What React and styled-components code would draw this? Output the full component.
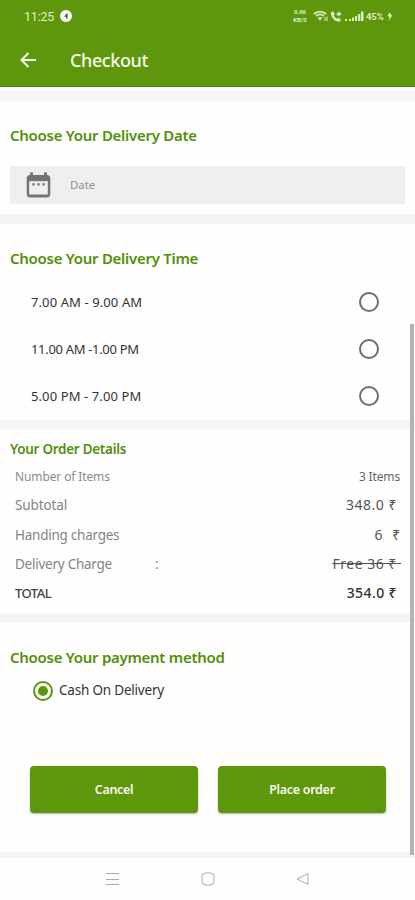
import React from "react";
import styled, { createGlobalStyle } from "styled-components";

const GlobalStyle = createGlobalStyle`
    * {
        box-sizing: border-box;
    }
    body {
        margin: 0;
        background-color: #fefefe;
        font-family: "Noto Sans", "Open Sans", sans-serif;
    }
`;

const Screen = styled.div`
    position: relative;
    width: 415px;
    height: 900px;
    overflow: hidden;
    display: flex;
    flex-direction: column;
    background-color: #fefefe;
`;

const Header = styled.header`
    height: 87px;
    background-color: #5f970c;
    border-bottom: 1px solid #52850a;
    color: #f6faec;
    flex-shrink: 0;
`;

const StatusBar = styled.div`
    height: 32px;
    padding: 0 22px 0 24px;
    display: flex;
    align-items: center;
    justify-content: space-between;
`;

const Clock = styled.div`
    display: flex;
    align-items: center;
    gap: 6px;
    font-family: Roboto, sans-serif;
    font-size: 12.5px;
    letter-spacing: -0.2px;
    color: #e0eec5;
`;

const AppBar = styled.div`
    height: 55px;
    padding-left: 19px;
    display: flex;
    align-items: center;
    gap: 32px;
`;

const Text = styled.span`
    font-size: ${props => props.$size}px;
    font-weight: ${props => props.$weight || 400};
    letter-spacing: ${props => props.$spacing || 0}px;
    color: ${props => props.$color || "#444"};
    line-height: 20px;
    white-space: pre;
`;

const Band = styled.div`
    height: ${props => props.$height}px;
    margin-top: ${props => props.$top || 0}px;
    background-color: #f5f5f6;
    flex-shrink: 0;
`;

const Section = styled.section`
    height: ${props => props.$height}px;
    padding: ${props => props.$top}px 10px 0;
    flex-shrink: 0;
`;

const Title = styled.h2`
    margin: 0;
    height: 20px;
    line-height: ${props => (props.$size ? 20 : 18)}px;
    color: #548f0a;
    font-size: ${props => props.$size || 15}px;
    font-weight: 600;
    letter-spacing: -0.28px;
    white-space: nowrap;
`;

const DateField = styled.div`
    margin-top: 20px;
    height: 38px;
    padding-left: 16px;
    display: flex;
    align-items: center;
    gap: 19px;
    background-color: #efefef;
`;

const TimeList = styled.div`
    padding: 10px 26px 0 21px;
`;

const TimeRow = styled.div`
    height: 47px;
    display: flex;
    align-items: center;
    justify-content: space-between;
`;

const TimeLabel = styled(Text)`
    padding-bottom: 1px;
`;

const Radio = styled.span`
    width: 20px;
    height: 20px;
    margin-bottom: 1px;
    border: 2px solid ${props => (props.$checked ? "#5f970c" : "#6c6c6c")};
    border-radius: 50%;
    display: flex;
    align-items: center;
    justify-content: center;

    &::after {
        content: "";
        width: 10px;
        height: 10px;
        border-radius: 50%;
        background-color: ${props => (props.$checked ? "#5f970c" : "transparent")};
    }
`;

const Details = styled.div`
    padding: 3px 0 0 5px;
`;

const DetailRow = styled.div`
    height: ${props => props.$height}px;
    padding-right: ${props => props.$right}px;
    display: flex;
    align-items: center;
`;

const Colon = styled(Text)`
    margin-left: 43px;
`;

const Amount = styled(Text)`
    margin-left: auto;
    text-decoration: ${props => (props.$strike ? "line-through" : "none")};
`;

const Payment = styled.div`
    height: 34px;
    padding: 13px 0 0 23px;
    display: flex;
    align-items: flex-start;
    gap: 6px;
`;

const PaymentLabel = styled(Text)`
    line-height: 19px;
`;

const Buttons = styled.div`
    margin-top: 64px;
    padding: 0 19px 0 20px;
    display: flex;
    gap: 20px;
`;

const Button = styled.button`
    flex: 1;
    height: 47px;
    padding: 0;
    border: none;
    border-radius: 4px;
    background-color: #5f970c;
    box-shadow: 0 1px 2px rgba(0, 0, 0, 0.3);
    font-family: inherit;
`;

const NavBar = styled.nav`
    flex: 1;
    padding: 0 105px 0 106px;
    display: flex;
    align-items: center;
    justify-content: space-between;
`;

const ScrollThumb = styled.div`
    position: absolute;
    top: 324px;
    right: 1px;
    width: 4px;
    height: 531px;
    background-color: #b3b3b3;
`;

const NetSpeed = styled.div`
    width: 16px;
    display: flex;
    flex-direction: column;
    align-items: center;
    font-size: 6px;
    line-height: 8px;
`;

const StatusRight = styled.div`
    display: flex;
    align-items: center;
    color: #dcecc2;
    font-family: Roboto, sans-serif;
    font-weight: 700;
`;

const SignalIcons = styled.svg`
    margin-left: 5px;
`;

const Battery = styled.span`
    width: 20px;
    margin-left: 2px;
    font-size: 9.5px;
    letter-spacing: -0.1px;
`;

const NoticeIcon = () => (
    <svg width="12" height="12" viewBox="0 0 12 12">
        <circle cx="6" cy="6" r="6" fill="#fff" />
        <path d="M6.4 3.5 4 6.8h2V8.5h1.7V3.5z" fill="#555b4c" />
    </svg>
);

const StatusIcons = () => (
    <StatusRight>
        <NetSpeed>
            <span>0.86</span>
            <span>KB/S</span>
        </NetSpeed>
        <SignalIcons width="51" height="16" viewBox="21 0 51 16" fill="#dcecc2">
            <g fill="none" stroke="#dcecc2">
                <path d="M22 6c3.5-3.3 8.5-3.3 12 0M24.2 8c2.2-2 5.4-2 7.6 0" strokeWidth="1.8" />
                <path d="M26 9.5h4l-2 3z" fill="#dcecc2" strokeWidth=".5" />
                <path d="M33 9v4M35 8.5v4.5" strokeWidth="1" />
            </g>
            <path d="M39 4.2l2-1 2 2.7-1.1 1.4c.8 1.8 1.7 2.7 3.2 3.5l1.3-1 2.5 1.8-.8 1.8c-4.7 1.2-10-4.5-9.1-9.2z" />
            <path d="M44 6.2l3.5-3 .1 1.8h1.6v2h-1.6v1.8z" />
            <path d="M53 11h2v2h-2zM57 11h2v2h-2zM60 9.5h2V13h-2zM63 8h2v5h-2zM66 6h2.3v7H66zM69 3.5h2.5V13H69z" />
        </SignalIcons>
        <Battery>45%</Battery>
        <svg width="7" height="12" viewBox="0 0 7 12" fill="#dcecc2">
            <path d="M3 3 1.5 6.5h2L2.500 11l4-6h-2.200L5 3z" />
        </svg>
    </StatusRight>
);

const BackIcon = () => (
    <svg width="19" height="18" viewBox="0 0 19 18" fill="none" stroke="#f5faec" strokeWidth="2">
        <path d="M17 9H3M9.5 2 2.5 9l7 7" />
    </svg>
);

const CalendarIcon = () => (
    <svg width="25" height="27" viewBox="0 0 25 27">
        <path d="M4 .5h3V3h11V.5h3V3c2.2.2 3.3 1.3 3.3 3.3V22c0 2.2-1.1 3.5-3.3 3.5H4c-2.2 0-3.3-1.3-3.3-3.5V6.3C.7 4.3 1.8 3.2 4 3z" fill="#747474" />
        <path d="M3.2 9.2h18.6v13.3H3.2z" fill="#efefef" />
        <path d="M6.2 11.2h2.4v2.4H6.2zM11.3 11.2h2.4v2.4h-2.4zM16.4 11.2h2.4v2.4h-2.4z" fill="#777" />
    </svg>
);

const times = [
    { label: "7.00 AM - 9.00 AM", spacing: 0.1 },
    { label: "11.00 AM -1.00 PM", spacing: -0.32 },
    { label: "5.00 PM - 7.00 PM", spacing: 0.1 }
];

const App = () => {
    return (
        <Screen>
            <GlobalStyle />
            <Header>
                <StatusBar>
                    <Clock>11:25 <NoticeIcon /></Clock>
                    <StatusIcons />
                </StatusBar>
                <AppBar>
                    <BackIcon />
                    <Text $size={18} $weight={500} $spacing={-0.4} $color="#f7fbee">Checkout</Text>
                </AppBar>
            </Header>
            <Band $height={10} $top={4} />
            <Section $height={113} $top={25}>
                <Title>Choose Your Delivery Date</Title>
                <DateField>
                    <CalendarIcon />
                    <Text $size={11.5} $spacing={-0.1} $color="#929292">Date</Text>
                </DateField>
            </Section>
            <Band $height={10} />
            <Section $height={196} $top={25}>
                <Title>Choose Your Delivery Time</Title>
                <TimeList>
                    {times.map((time) => (
                        <TimeRow key={time.label}>
                            <TimeLabel $size={13} $spacing={time.spacing} $color="#333">{time.label}</TimeLabel>
                            <Radio />
                        </TimeRow>
                    ))}
                </TimeList>
            </Section>
            <Band $height={9} />
            <Section $height={184} $top={10}>
                <Title $size={13.5}>Your Order Details</Title>
                <Details>
                    <DetailRow $height={29} $right={5}>
                        <Text $size={12} $spacing={-0.12} $color="#8a8a8a">Number of Items</Text>
                        <Amount $size={12} $spacing={-0.15} $color="#666">3 Items</Amount>
                    </DetailRow>
                    <DetailRow $height={28} $right={8}>
                        <Text $size={13.5} $spacing={-0.1} $color="#858585">Subtotal</Text>
                        <Amount $size={14} $spacing={0.5} $color="#555">348.0 ₹</Amount>
                    </DetailRow>
                    <DetailRow $height={31} $right={4}>
                        <Text $size={13.5} $spacing={-0.25} $color="#858585">Handing charges</Text>
                        <Amount $size={14} $spacing={0.8} $color="#555">6  ₹</Amount>
                    </DetailRow>
                    <DetailRow $height={28} $right={4}>
                        <Text $size={13.5} $spacing={-0.25} $color="#858585">Delivery Charge</Text>
                        <Colon $size={13.5} $color="#858585">:</Colon>
                        <Amount $size={14} $spacing={0.5} $color="#555" $strike>Free 36 ₹ </Amount>
                    </DetailRow>
                    <DetailRow $height={30} $right={8}>
                        <Text $size={13} $weight={500} $spacing={-0.5} $color="#444">TOTAL</Text>
                        <Amount $size={14} $weight={500} $spacing={0.4} $color="#333">354.0 ₹</Amount>
                    </DetailRow>
                </Details>
            </Section>
            <Band $height={9} />
            <Section $height={230} $top={26}>
                <Title>Choose Your payment method</Title>
                <Payment>
                    <Radio $checked />
                    <PaymentLabel $size={13.5} $spacing={-0.2} $color="#333">Cash On Delivery</PaymentLabel>
                </Payment>
                <Buttons>
                    <Button><Text $size={12.5} $weight={600} $spacing={-0.35} $color="#f7fbee">Cancel</Text></Button>
                    <Button><Text $size={12.5} $weight={600} $spacing={-0.3} $color="#f7fbee">Place order</Text></Button>
                </Buttons>
            </Section>
            <Band $height={6} />
            <NavBar>
                <svg width="13" height="14" viewBox="0 0 13 14" stroke="#aaa">
                    <path d="M0 1.500h13M0 7.500h13M0 12.500h13" />
                </svg>
                <svg width="14" height="14" viewBox="0 0 14 14" fill="none" stroke="#aaa">
                    <rect x="1" y="1" width="12" height="12" rx="3.500" />
                </svg>
                <svg width="14" height="14" viewBox="0 0 14 14" fill="none" stroke="#aaa" strokeLinejoin="round">
                    <path d="M1 7 12 1.500v11z" />
                </svg>
            </NavBar>
            <ScrollThumb />
        </Screen>
    );
};

export default App;
